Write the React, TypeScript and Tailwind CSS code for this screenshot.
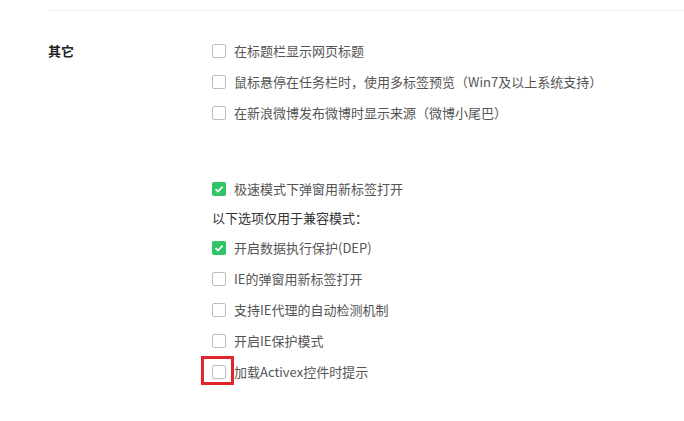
import React from "react";

type Opt = { label: string; checked?: boolean; highlight?: boolean };

const groupA: Opt[] = [
  { label: "在标题栏显示网页标题" },
  { label: "鼠标悬停在任务栏时，使用多标签预览（Win7及以上系统支持）" },
  { label: "在新浪微博发布微博时显示来源（微博小尾巴）" },
];

const groupB: Opt[] = [
  { label: "开启数据执行保护(DEP)", checked: true },
  { label: "IE的弹窗用新标签打开" },
  { label: "支持IE代理的自动检测机制" },
  { label: "开启IE保护模式" },
  { label: "加载Activex控件时提示", highlight: true },
];

function Box({ checked }: { checked?: boolean }) {
  if (checked) {
    return (
      <span className="flex h-[14px] w-[14px] items-center justify-center rounded-[2px] bg-[#2fc465]">
        <svg width="10" height="10" viewBox="0 0 10 10" fill="none">
          <path d="M1.5 5.2 L4 7.6 L8.6 2.6" stroke="#fff" strokeWidth="1.6" />
        </svg>
      </span>
    );
  }
  return <span className="block h-[14px] w-[14px] rounded-[2px] border border-[#bdbdbd] bg-white" />;
}

function Row({ label, checked, highlight }: Opt) {
  return (
    <div className="flex h-[31px] items-center">
      <div className="relative flex h-[14px] w-[14px] items-center justify-center">
        <Box checked={checked} />
        {highlight && (
          <span className="absolute left-[-11px] top-[-9px] h-[29px] w-[33px] border-[3px] border-[#e0262b]" />
        )}
      </div>
      <span className="ml-[8px] text-[13px] text-[#555]">{label}</span>
    </div>
  );
}

export default function App() {
  return (
    <div
      className="h-[421px] w-[684px] overflow-hidden bg-white"
      style={{ fontFamily: '"Microsoft YaHei", "Noto Sans CJK SC", sans-serif' }}
    >
      <div className="ml-[48px] mt-[10px] h-px bg-[#f0f0f0]" />
      <div className="mt-[24px] flex">
        <div className="w-[212px] shrink-0 pl-[48px]">
          <div className="flex h-[31px] items-center text-[13px] font-bold text-[#222]">其它</div>
        </div>
        <div className="flex flex-col">
          {groupA.map(o => (
            <Row key={o.label} {...o} />
          ))}
          <div className="h-[45px]" />
          <Row label="极速模式下弹窗用新标签打开" checked />
          <div className="flex h-[28px] items-center text-[13px] text-[#333]">以下选项仅用于兼容模式：</div>
          {groupB.map(o => (
            <Row key={o.label} {...o} />
          ))}
        </div>
      </div>
    </div>
  );
}
